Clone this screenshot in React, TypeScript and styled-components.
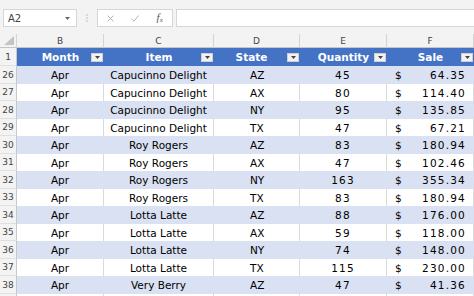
import React from "react";
import styled, { createGlobalStyle } from "styled-components";

const GlobalStyle = createGlobalStyle`
  html, body { margin: 0; padding: 0; background: #ffffff; }
  body { font-family: "DejaVu Sans", "Liberation Sans", sans-serif; }
  * { box-sizing: border-box; }
`;

const COLS = "17px 87px 110px 86px 87px 87px";

const Frame = styled.div`
  width: 474px;
  height: 296px;
  overflow: hidden;
  background: #ffffff;
  display: flex;
  flex-direction: column;
`;

const Toolbar = styled.div`
  flex: none;
  height: 34px;
  padding: 9px 0 0 3px;
  background: #f3f3f3;
  display: flex;
  align-items: flex-start;
`;

const NameBox = styled.div`
  width: 74px;
  height: 18px;
  border: 1px solid #d6d6d6;
  background: #ffffff;
  display: flex;
  align-items: center;
  justify-content: space-between;
  padding: 0 6px 0 4px;
  font-size: 10px;
  color: #444444;
`;

const Grip = styled.div`
  width: 20px;
  height: 18px;
  display: flex;
  align-items: center;
  justify-content: center;
`;

const FxBox = styled.div`
  width: 76px;
  height: 18px;
  border: 1px solid #d6d6d6;
  background: #ffffff;
  display: grid;
  grid-template-columns: repeat(3, 1fr);
  align-items: center;
  justify-items: center;
`;

const FxLabel = styled.span`
  font-family: "Liberation Serif", serif;
  font-style: italic;
  font-size: 11px;
  color: #555555;
  line-height: 1;
  sub {
    font-size: 7px;
    vertical-align: -1px;
  }
`;

const FormulaInput = styled.div`
  flex: 1;
  height: 18px;
  margin-left: 3px;
  border: 1px solid #d6d6d6;
  border-right: none;
  background: #ffffff;
`;

const Sheet = styled.div`
  display: flex;
  flex-direction: column;
`;

const Row = styled.div<{ $h: number }>`
  display: grid;
  grid-template-columns: ${COLS};
  height: ${(p) => p.$h}px;
  flex: none;
`;

const Corner = styled.div`
  background: #f3f3f3;
  border-right: 1px solid #d4d4d4;
  border-bottom: 1px solid #c6c6c6;
  display: flex;
  align-items: flex-end;
  justify-content: flex-end;
  padding: 0 2px 2px 0;
`;

const ColLetter = styled.div`
  background: #f3f3f3;
  border-right: 1px solid #d4d4d4;
  border-bottom: 1px solid #c6c6c6;
  font-size: 9px;
  color: #444444;
  display: flex;
  align-items: center;
  justify-content: center;
`;

const RowNum = styled.div`
  background: #f3f3f3;
  border-right: 1px solid #c8c8c8;
  border-bottom: 1px solid #e0e0e0;
  font-size: 9px;
  color: #444444;
  display: flex;
  align-items: center;
  justify-content: center;
`;

const HeadCell = styled.div`
  background: #4472c4;
  display: grid;
  align-items: center;
`;

const HeadLabel = styled.span<{ $shift?: number }>`
  grid-area: 1 / 1;
  justify-self: center;
  margin-right: ${(p) => (p.$shift ?? 0) * 2}px;
  color: #ffffff;
  font-weight: bold;
  font-size: 10.5px;
`;

const FilterButton = styled.span`
  grid-area: 1 / 1;
  justify-self: end;
  margin-right: 1px;
  width: 12px;
  height: 9px;
  background: #f2f2f2;
  border: 1px solid #d0d0d0;
  display: flex;
  align-items: center;
  justify-content: center;
`;

const Cell = styled.div<{ $band: boolean; $align?: "center" | "left" | "split"; $indent?: number }>`
  background: ${(p) => (p.$band ? "#d9e1f2" : "#ffffff")};
  border-right: 1px solid ${(p) => (p.$band ? "#d9e1f2" : "#dadada")};
  font-size: 10.5px;
  color: #000000;
  display: flex;
  align-items: center;
  white-space: nowrap;
  justify-content: ${(p) =>
    p.$align === "left" ? "flex-start" : p.$align === "split" ? "space-between" : "center"};
  padding: ${(p) => (p.$align === "left" ? `0 0 0 ${p.$indent ?? 0}px` : p.$align === "split" ? "0 7px 0 8px" : "0")};
`;

const Num = styled.span`
  letter-spacing: 1.2px;
`;

const Triangle = ({ color = "#444" }: { color?: string }) => (
  <svg width="5" height="3" viewBox="0 0 5 3">
    <path d="M0 0 H5 L2.5 3 Z" fill={color} />
  </svg>
);

type Rec = [number, string, string, string, number, string];

const data: Rec[] = [
  [26, "Apr", "Capucinno Delight", "AZ", 45, "64.35"],
  [27, "Apr", "Capucinno Delight", "AX", 80, "114.40"],
  [28, "Apr", "Capucinno Delight", "NY", 95, "135.85"],
  [29, "Apr", "Capucinno Delight", "TX", 47, "67.21"],
  [30, "Apr", "Roy Rogers", "AZ", 83, "180.94"],
  [31, "Apr", "Roy Rogers", "AX", 47, "102.46"],
  [32, "Apr", "Roy Rogers", "NY", 163, "355.34"],
  [33, "Apr", "Roy Rogers", "TX", 83, "180.94"],
  [34, "Apr", "Lotta Latte", "AZ", 88, "176.00"],
  [35, "Apr", "Lotta Latte", "AX", 59, "118.00"],
  [36, "Apr", "Lotta Latte", "NY", 74, "148.00"],
  [37, "Apr", "Lotta Latte", "TX", 115, "230.00"],
  [38, "Apr", "Very Berry", "AZ", 47, "41.36"],
];

const headers: { label: string; shift?: number }[] = [
  { label: "Month" },
  { label: "Item" },
  { label: "State", shift: 5.5 },
  { label: "Quantity" },
  { label: "Sale" },
];

export default function App() {
  return (
    <Frame>
      <GlobalStyle />
      <Toolbar>
        <NameBox>
          <span>A2</span>
          <Triangle color="#666" />
        </NameBox>
        <Grip>
          <svg width="2" height="8" viewBox="0 0 2 8">
            <circle cx="1" cy="1" r="0.8" fill="#b8b8b8" />
            <circle cx="1" cy="4" r="0.8" fill="#b8b8b8" />
            <circle cx="1" cy="7" r="0.8" fill="#b8b8b8" />
          </svg>
        </Grip>
        <FxBox>
          <svg width="7" height="7" viewBox="0 0 7 7">
            <path d="M0.5 0.5 L6.5 6.5 M6.5 0.5 L0.5 6.5" stroke="#b4b4b4" strokeWidth="1" />
          </svg>
          <svg width="8" height="7" viewBox="0 0 8 7">
            <path d="M0.5 3.8 L3 6.2 L7.5 0.5" stroke="#b4b4b4" strokeWidth="1" fill="none" />
          </svg>
          <FxLabel>
            f<sub>x</sub>
          </FxLabel>
        </FxBox>
        <FormulaInput />
      </Toolbar>
      <Sheet>
        <Row $h={14}>
          <Corner>
            <svg width="10" height="9" viewBox="0 0 10 9">
              <path d="M10 0 V9 H0 Z" fill="#c4c4c4" />
            </svg>
          </Corner>
          {["B", "C", "D", "E", "F"].map((l) => (
            <ColLetter key={l}>{l}</ColLetter>
          ))}
        </Row>
        <Row $h={18}>
          <RowNum>1</RowNum>
          {headers.map((h) => (
            <HeadCell key={h.label}>
              <HeadLabel $shift={h.shift}>{h.label}</HeadLabel>
              <FilterButton>
                <Triangle />
              </FilterButton>
            </HeadCell>
          ))}
        </Row>
        {data.map(([n, month, item, state, qty, sale], i) => {
          const band = n % 2 === 0;
          return (
            <Row key={n} $h={i % 2 === 0 ? 18 : 17}>
              <RowNum>{n}</RowNum>
              <Cell $band={band}>{month}</Cell>
              <Cell $band={band}>{item}</Cell>
              <Cell $band={band} $align="left" $indent={36}>
                {state}
              </Cell>
              <Cell $band={band}>
                <Num>{qty}</Num>
              </Cell>
              <Cell $band={band} $align="split">
                <span>$</span>
                <Num>{sale}</Num>
              </Cell>
            </Row>
          );
        })}
        <Row $h={17}>
          <RowNum />
          <Cell $band={false} />
          <Cell $band={false} />
          <Cell $band={false} />
          <Cell $band={false} />
          <Cell $band={false} />
        </Row>
      </Sheet>
    </Frame>
  );
}
